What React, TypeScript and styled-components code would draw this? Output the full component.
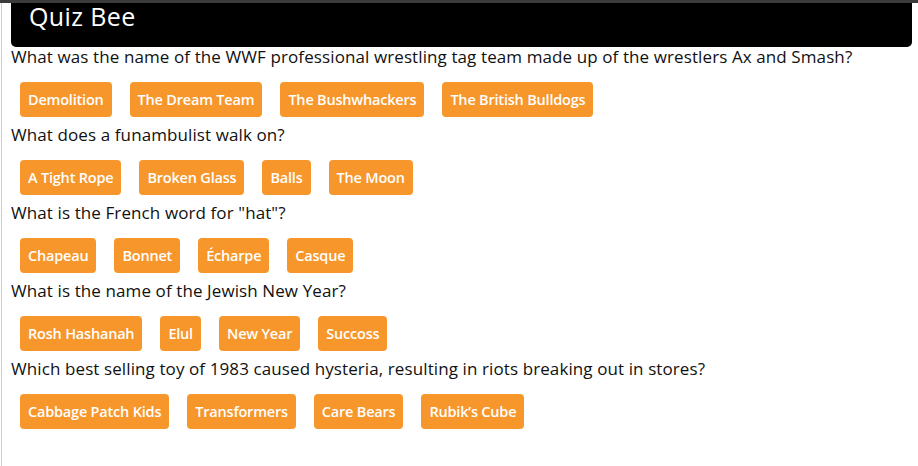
import React from "react";
import styled, { createGlobalStyle } from "styled-components";

const Global = createGlobalStyle`
  html, body { margin: 0; padding: 0; background: #fff; }
  body { font-family: "Open Sans", "Liberation Sans", sans-serif; }
`;

const TopBar = styled.div`
  height: 3px;
  background: #3b3b3b;
`;

const Frame = styled.div`
  margin-left: 1px;
  border-left: 1px solid #cfcfcf;
  min-height: 463px;
  padding: 0 6px 0 9px;
  box-sizing: border-box;
`;

const Header = styled.header`
  height: 44px;
  background: #000;
  border-radius: 0 0 5px 5px;
  color: #fff;
  font-size: 25px;
  line-height: 27px;
  padding-left: 18px;
  letter-spacing: 0.4px;
`;

const QuestionBlock = styled.section`
  display: flex;
  flex-direction: column;
`;

const Question = styled.div`
  font-size: 17px;
  line-height: 20px;
  color: #111;
  letter-spacing: 0.1px;
`;

const Answers = styled.div`
  display: flex;
  gap: 18px;
  margin: 15px 0 8px 9px;
`;

const Answer = styled.button`
  height: 35px;
  padding: 0 8px;
  border: none;
  border-radius: 4px;
  background: #f7962a;
  color: #fff;
  font-family: "Open Sans", "Liberation Sans", sans-serif;
  font-weight: 600;
  font-size: 14.5px;
  letter-spacing: -0.2px;
  cursor: pointer;
`;

const quiz = [
  {
    q: "What was the name of the WWF professional wrestling tag team made up of the wrestlers Ax and Smash?",
    a: ["Demolition", "The Dream Team", "The Bushwhackers", "The British Bulldogs"],
  },
  { q: "What does a funambulist walk on?", a: ["A Tight Rope", "Broken Glass", "Balls", "The Moon"] },
  { q: 'What is the French word for "hat"?', a: ["Chapeau", "Bonnet", "Écharpe", "Casque"] },
  { q: "What is the name of the Jewish New Year?", a: ["Rosh Hashanah", "Elul", "New Year", "Succoss"] },
  {
    q: "Which best selling toy of 1983 caused hysteria, resulting in riots breaking out in stores?",
    a: ["Cabbage Patch Kids", "Transformers", "Care Bears", "Rubik’s Cube"],
  },
];

export default function App() {
  return (
    <>
      <Global />
      <TopBar />
      <Frame>
        <Header>Quiz Bee</Header>
        {quiz.map((item) => (
          <QuestionBlock key={item.q}>
            <Question>{item.q}</Question>
            <Answers>
              {item.a.map((ans) => (
                <Answer key={ans}>{ans}</Answer>
              ))}
            </Answers>
          </QuestionBlock>
        ))}
      </Frame>
    </>
  );
}
